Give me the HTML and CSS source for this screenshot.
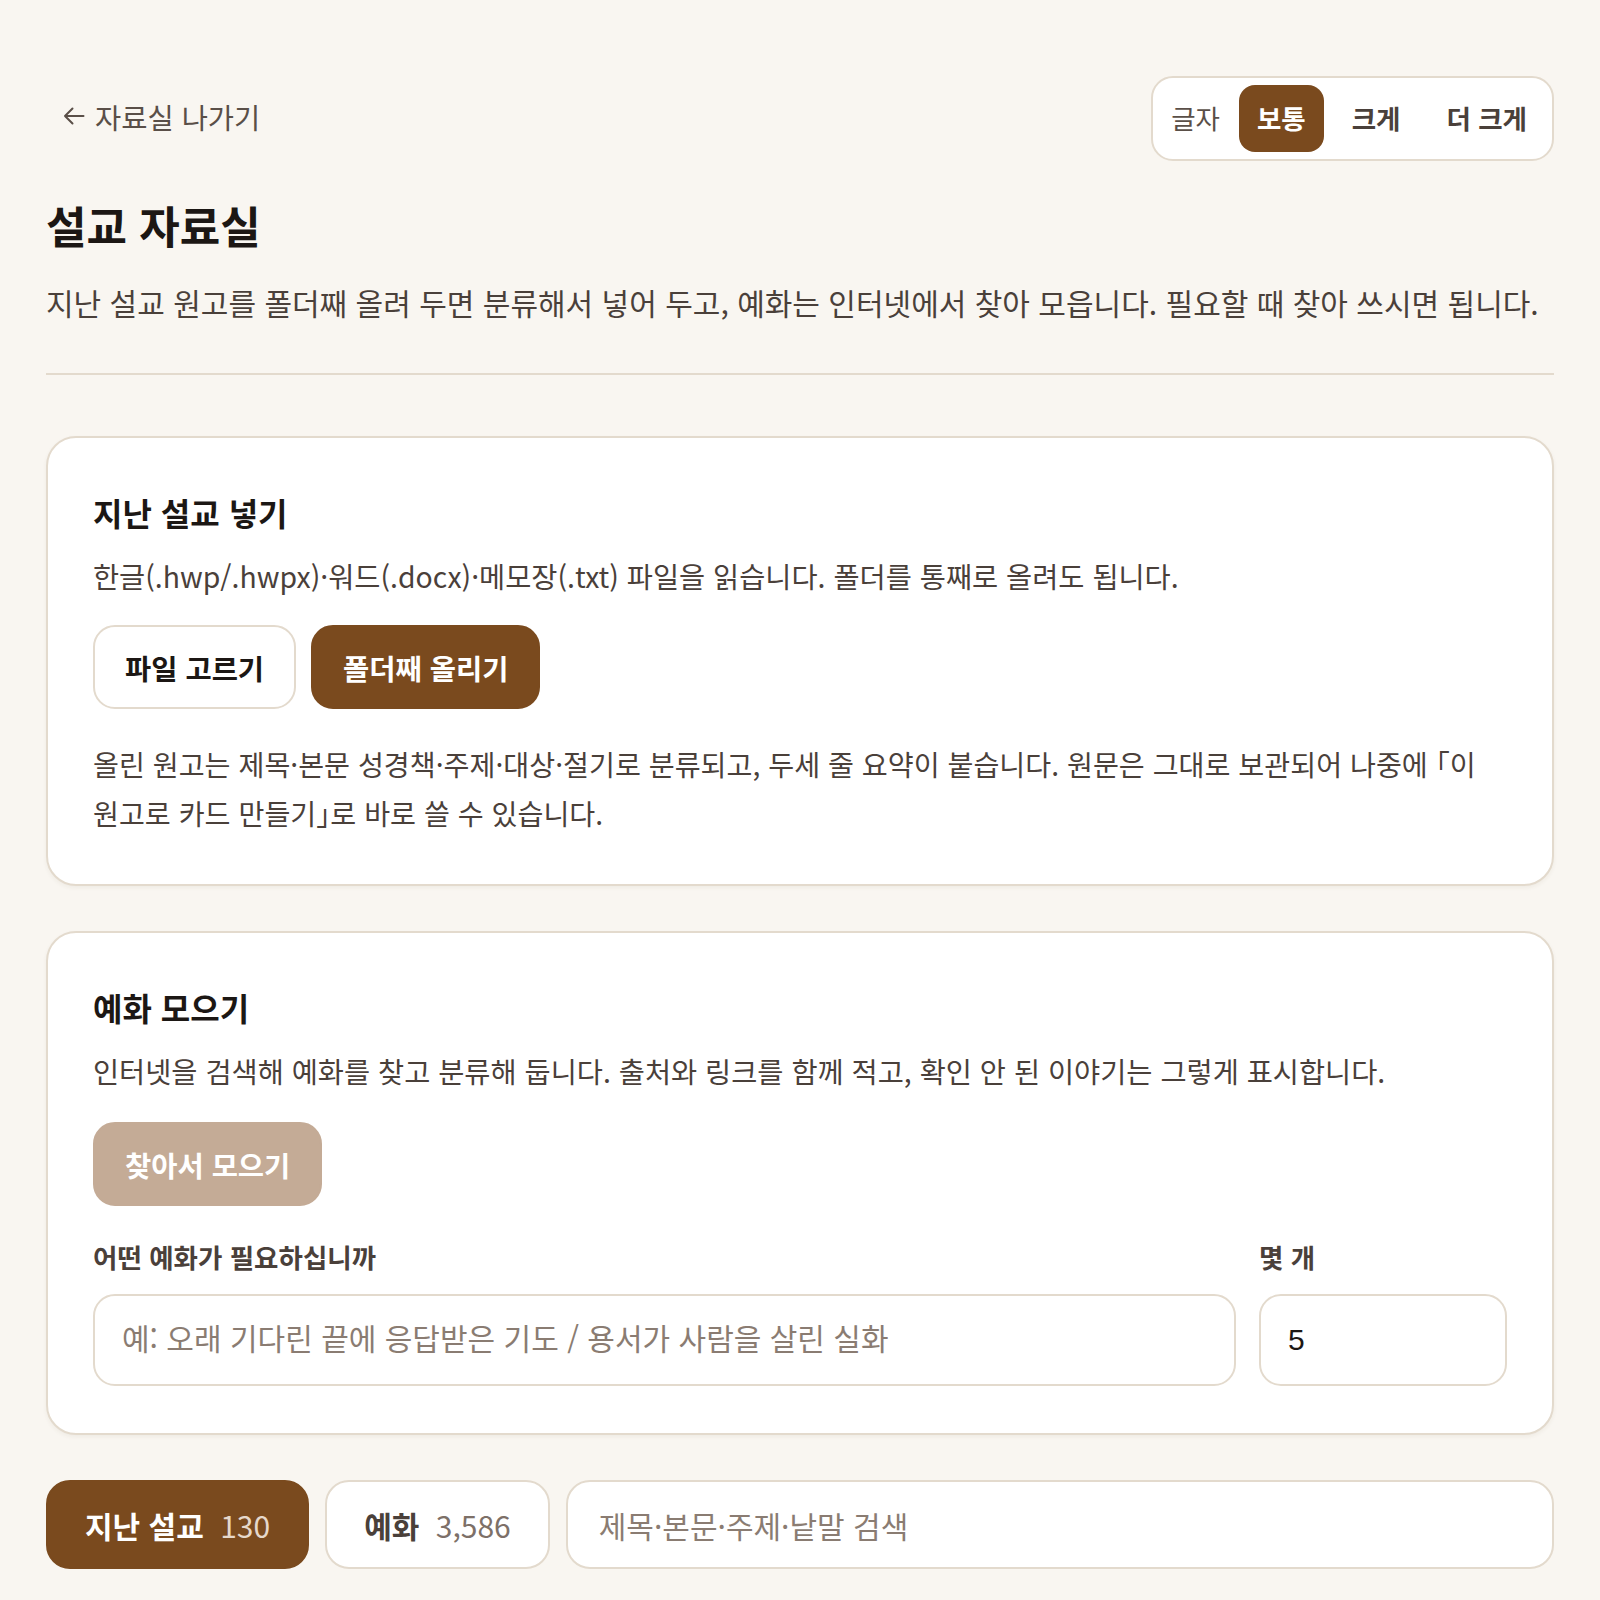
FILE: index.html
```html
<!DOCTYPE html>
<html lang="ko">
<head>
    <meta charset="UTF-8">
    <meta name="viewport" content="width=device-width, initial-scale=1.0">
    <title>설교 자료실</title>
    <link rel="stylesheet" href="styles.css">
</head>
<body>
    <div class="page">
        <div class="topbar">
            <a class="back-link" href="#">
                <svg class="back-arrow" width="22" height="20" viewBox="0 0 22 20" fill="none" stroke="currentColor" stroke-width="2" stroke-linecap="round" stroke-linejoin="round">
                    <path d="M20.5 10H2M9.5 2.5L2 10l7.5 7.5"/>
                </svg>
                자료실 나가기
            </a>
            <div class="size-switch">
                <span class="size-label">글자</span>
                <button class="size-btn active">보통</button>
                <button class="size-btn">크게</button>
                <button class="size-btn">더 크게</button>
            </div>
        </div>

        <h1 class="page-title">설교 자료실</h1>
        <p class="page-desc">지난 설교 원고를 폴더째 올려 두면 분류해서 넣어 두고, 예화는 인터넷에서 찾아 모읍니다. 필요할 때 찾아 쓰시면 됩니다.</p>

        <hr class="divider">

        <section class="card">
            <h2>지난 설교 넣기</h2>
            <p class="card-desc">한글(.hwp/.hwpx)·워드(.docx)·메모장(.txt) 파일을 읽습니다. 폴더를 통째로 올려도 됩니다.</p>
            <div class="btn-row">
                <button class="btn">파일 고르기</button>
                <button class="btn primary">폴더째 올리기</button>
            </div>
            <p class="card-note">올린 원고는 제목·본문 성경책·주제·대상·절기로 분류되고, 두세 줄 요약이 붙습니다. 원문은 그대로 보관되어 나중에 ｢이 원고로 카드 만들기｣로 바로 쓸 수 있습니다.</p>
        </section>

        <section class="card">
            <h2>예화 모으기</h2>
            <p class="card-desc">인터넷을 검색해 예화를 찾고 분류해 둡니다. 출처와 링크를 함께 적고, 확인 안 된 이야기는 그렇게 표시합니다.</p>
            <div class="btn-row wide">
                <button class="btn primary" disabled>찾아서 모으기</button>
            </div>
            <div class="field-row">
                <label class="field grow">
                    <span class="field-label">어떤 예화가 필요하십니까</span>
                    <input type="text" placeholder="예: 오래 기다린 끝에 응답받은 기도 / 용서가 사람을 살린 실화">
                </label>
                <label class="field count">
                    <span class="field-label">몇 개</span>
                    <input type="number" value="5">
                </label>
            </div>
        </section>

        <div class="tabs">
            <button class="tab active">지난 설교 <span class="num">130</span></button>
            <button class="tab">예화 <span class="num">3,586</span></button>
            <input class="search" type="text" placeholder="제목·본문·주제·낱말 검색">
        </div>
    </div>
</body>
</html>
```

FILE: styles.css
```css
body {
    margin: 0;
    background-color: #f9f6f1;
    font-family: "Noto Sans CJK JP", "Noto Sans CJK KR", sans-serif;
    color: #4a403a;
}

.page {
    padding: 76px 46px 40px;
}

.topbar {
    display: flex;
    justify-content: space-between;
    align-items: center;
}

.back-link {
    display: flex;
    align-items: center;
    font-size: 28.5px;
    color: #5a4f48;
    text-decoration: none;
    padding: 0 0 5px 17px;
}

.back-arrow {
    margin-right: 10px;
}

.size-switch {
    display: flex;
    align-items: center;
    gap: 10px;
    background: white;
    border: 2px solid #e3dacd;
    border-radius: 22px;
    padding: 7px;
}

.size-label {
    font-size: 26.5px;
    color: #5a4f48;
    padding: 0 9px 3px 11px;
}

.size-btn {
    font-family: inherit;
    font-size: 26.5px;
    font-weight: 600;
    color: #4a403a;
    background: none;
    border: none;
    border-radius: 16px;
    height: 67px;
    padding: 0 18px 3px;
    cursor: pointer;
}

.size-btn.active {
    background-color: #7a4a1e;
    color: white;
}

.page-title {
    font-size: 44px;
    font-weight: 700;
    color: #1c1714;
    line-height: 58px;
    margin: 35px 0 0;
}

.page-desc {
    font-size: 30px;
    line-height: 48px;
    margin: 24px 0 0;
}

.divider {
    border: none;
    border-top: 2px solid #e3dacd;
    margin: 47px 0 61px;
}

.card {
    background: white;
    border: 2px solid #e3dacd;
    border-radius: 30px;
    padding: 46px 45px 47px;
    margin-bottom: 45px;
    box-shadow: 0 2px 4px rgba(90, 60, 30, 0.06);
}

.card h2 {
    font-size: 32px;
    font-weight: 700;
    color: #1c1714;
    line-height: 44px;
    margin: 6px 0 0;
}

.card-desc {
    font-size: 28.4px;
    line-height: 44px;
    margin: 20px 0 0;
}

.btn-row {
    display: flex;
    gap: 15px;
    margin-top: 27px;
}

.btn-row.wide {
    margin-top: 29px;
}

.btn {
    font-family: inherit;
    font-size: 28.5px;
    font-weight: 600;
    color: #1c1714;
    background: white;
    border: 2px solid #e3dacd;
    border-radius: 22px;
    height: 84px;
    padding: 0 30px;
    cursor: pointer;
}

.btn.primary {
    background-color: #7a4a1e;
    border-color: #7a4a1e;
    color: white;
}

.btn.primary:disabled {
    background-color: #c4ab96;
    border-color: #c4ab96;
    cursor: default;
}

.card-note {
    font-size: 28.2px;
    line-height: 49px;
    margin: 30px 0 0;
}

.field-row {
    display: flex;
    gap: 23px;
    margin-top: 34px;
}

.field {
    display: flex;
    flex-direction: column;
}

.field.grow {
    flex: 1;
}

.field.count {
    width: 248px;
}

.field-label {
    font-size: 26.5px;
    font-weight: 600;
    line-height: 34px;
    color: #4a403a;
    margin-bottom: 20px;
}

.field input {
    font-family: "Liberation Sans", "Noto Sans CJK JP", sans-serif;
    font-size: 30px;
    color: #1c1714;
    background: white;
    border: 2px solid #e3dacd;
    border-radius: 22px;
    height: 92px;
    box-sizing: border-box;
    padding: 0 27px;
    outline: none;
}

.field input::placeholder,
.search::placeholder {
    font-family: "Noto Sans CJK JP", sans-serif;
    color: #8a7c72;
}

.field input[type="number"]::-webkit-inner-spin-button {
    -webkit-appearance: none;
}

.tabs {
    display: flex;
    gap: 16px;
}

.tab {
    font-family: inherit;
    font-size: 30px;
    font-weight: 700;
    color: #4a403a;
    background: white;
    border: 2px solid #e3dacd;
    border-radius: 24px;
    height: 89px;
    padding: 0 37px;
    cursor: pointer;
}

.tab .num {
    font-weight: 400;
    margin-left: 8px;
    color: #7d7068;
}

.tab.active {
    background-color: #7a4a1e;
    border-color: #7a4a1e;
    color: white;
}

.tab.active .num {
    color: #e6d8cb;
}

.search {
    flex: 1;
    font-family: "Noto Sans CJK JP", sans-serif;
    font-size: 30px;
    background: white;
    border: 2px solid #e3dacd;
    border-radius: 24px;
    height: 89px;
    box-sizing: border-box;
    padding: 0 31px;
    outline: none;
}
```
